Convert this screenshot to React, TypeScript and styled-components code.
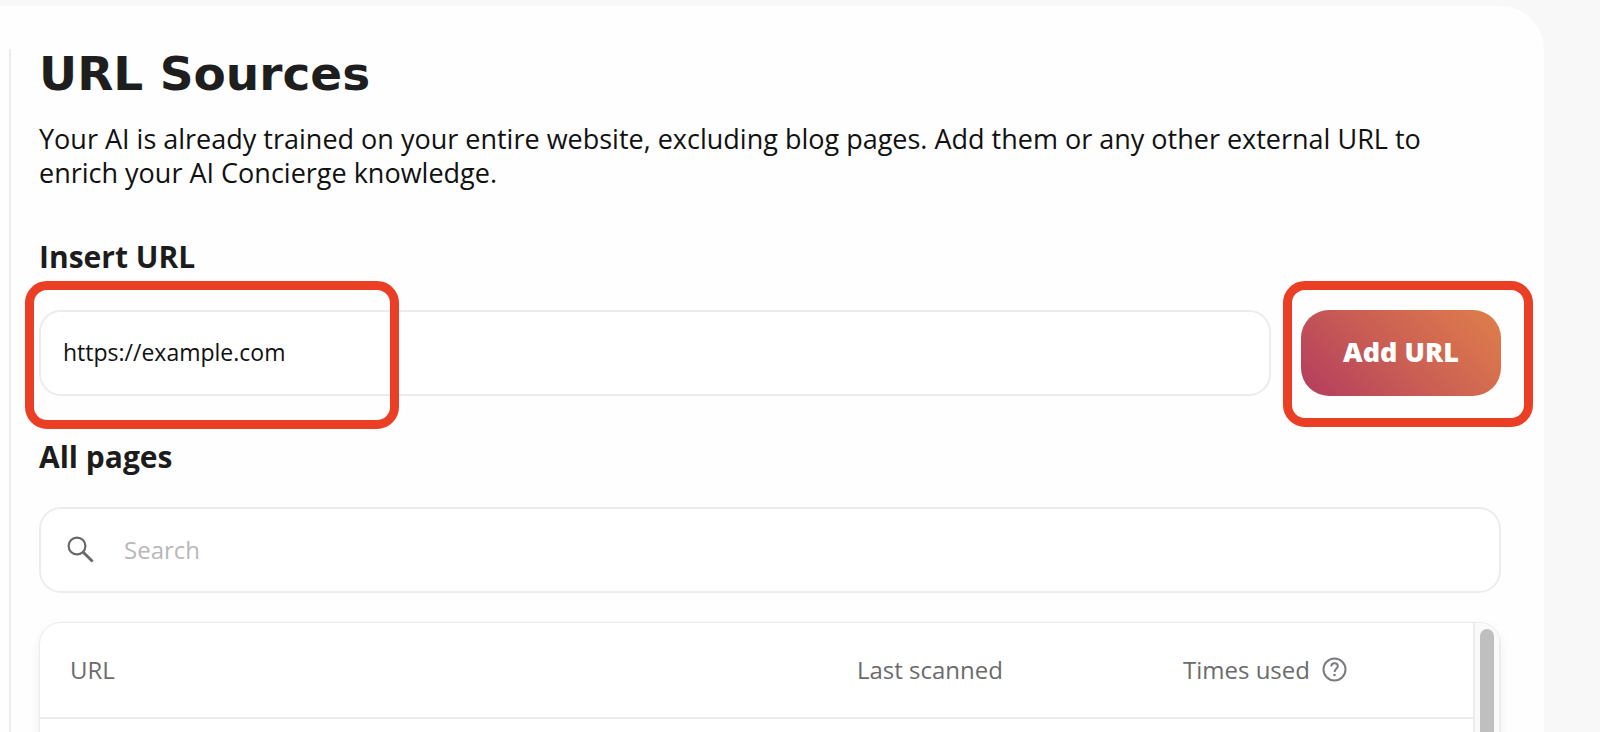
import React from 'react';
import styled, { createGlobalStyle } from 'styled-components';

const GlobalStyle = createGlobalStyle`
  * { box-sizing: border-box; }
  html, body { margin: 0; height: 100%; }
  body {
    background: #f8f8f8;
    color: #111;
    font-family: 'Open Sans', 'Noto Sans', sans-serif;
    overflow: hidden;
  }
`;

const line = '#ececec';

const Page = styled.div`
  height: 100vh;
  overflow: hidden;
  padding: 6px 56px 0 0;
`;

const Panel = styled.main`
  min-height: 100%;
  padding: 43px 43px 0 9px;
  background: #fefefe;
  border-top-right-radius: 44px;
`;

const Content = styled.div`
  min-height: 900px;
  padding-left: 28px;
  border-left: 2px solid ${line};
`;

const Title = styled.h1`
  margin: 0;
  color: #1e1e1e;
  font: 700 47px/50px 'DejaVu Sans', sans-serif;
`;

const Intro = styled.p`
  margin: 23px 0 0;
  max-width: 1400px;
  font-size: 27px;
  line-height: 34px;
`;

const FieldTitle = styled.label`
  display: block;
  margin-top: 47px;
  color: #1c1c1c;
  font-size: 30px;
  font-weight: 700;
  line-height: 40px;
`;

const SectionTitle = styled.h2`
  margin: 41px 0 0;
  color: #1c1c1c;
  font-size: 30px;
  font-weight: 700;
  line-height: 40px;
`;

const UrlForm = styled.form`
  display: flex;
  gap: 30px;
  margin-top: 33px;
`;

const Marked = styled.div<{ $grow?: boolean }>`
  position: relative;
  display: flex;
  flex: ${(p) => (p.$grow ? '1 1 0' : '0 0 200px')};
`;

const Highlight = styled.span<{ $kind: 'field' | 'button' }>`
  position: absolute;
  top: -29px;
  left: ${(p) => (p.$kind === 'field' ? '-14px' : '-18px')};
  width: ${(p) => (p.$kind === 'field' ? '374px' : '250px')};
  height: ${(p) => (p.$kind === 'field' ? '148px' : '146px')};
  border: 9px solid #eb3f25;
  border-radius: 22px;
  pointer-events: none;
`;

const UrlInput = styled.input`
  width: 100%;
  height: 86px;
  padding: 0 22px 2px;
  border: 2px solid ${line};
  border-radius: 22px;
  background: #fff;
  color: #111;
  font: 400 23px 'Open Sans', sans-serif;
  outline: none;
`;

const AddButton = styled.button`
  width: 100%;
  height: 86px;
  padding: 0 0 4px;
  border: 0;
  border-radius: 28px;
  background: linear-gradient(45deg, #b7425d 8%, #cb6053 50%, #de7c4b 95%);
  color: #fff;
  font: 800 27px 'Open Sans', sans-serif;
`;

const SearchBox = styled.label`
  display: flex;
  align-items: center;
  gap: 30px;
  height: 86px;
  margin-top: 30px;
  padding: 0 24px 2px 26px;
  border: 2px solid ${line};
  border-radius: 22px;
  background: #fff;
`;

const SearchInput = styled.input`
  flex: 1;
  padding: 0;
  border: 0;
  background: transparent;
  color: #111;
  font: 400 24px 'Open Sans', sans-serif;
  outline: none;

  &::placeholder { color: #b8b8b8; opacity: 1; }
`;

const TableFrame = styled.section`
  display: flex;
  height: 400px;
  margin-top: 29px;
  overflow: hidden;
  border: 1px solid ${line};
  border-radius: 22px 22px 0 0;
  box-shadow: 0 4px 12px rgba(0, 0, 0, 0.06);
  background: #fff;
`;

const UrlTable = styled.table`
  flex: 1;
  align-self: flex-start;
  border-collapse: collapse;
  table-layout: fixed;
`;

const HeaderCell = styled.th<{ $width?: string }>`
  width: ${(p) => p.$width ?? 'auto'};
  height: 95px;
  padding: 0 0 2px 30px;
  border-bottom: 2px solid ${line};
  color: #6b6b6b;
  font-size: 24px;
  font-weight: 400;
  text-align: left;
`;

const HeaderLabel = styled.span`
  display: flex;
  align-items: center;
  gap: 12px;
`;

const ScrollTrack = styled.div`
  flex: 0 0 27px;
  padding: 6px 5px 0;
  border: solid ${line};
  border-width: 0 1px 0 2px;
  background: #fafafa;
`;

const ScrollThumb = styled.div`
  height: 260px;
  border-radius: 7px;
  background: #bfbfbf;
`;

const SearchIcon = () => (
  <svg width="27" height="27" viewBox="0 0 27 27" fill="none" stroke="#686868" strokeWidth="2.2" aria-hidden="true">
    <circle cx="10" cy="10" r="8.4" />
    <path d="M16 16L25.6 25.6" strokeWidth="2.8" />
  </svg>
);

const HelpIcon = () => (
  <svg width="25" height="25" viewBox="0 0 25 25" fill="none" stroke="#7c7c80" strokeWidth="2" aria-hidden="true">
    <circle cx="12.5" cy="12.5" r="11" />
    <path d="M9.3 9.4C9.3 7.3 10.7 6.3 12.6 6.3S15.8 7.4 15.8 9.1C15.8 11.6 12.6 12 12.6 14.9" />
    <circle cx="12.5" cy="18" r="1.3" fill="#7c7c80" stroke="none" />
  </svg>
);

export default function App() {
  return (
    <Page>
      <GlobalStyle />
      <Panel>
        <Content>
          <Title>URL Sources</Title>
          <Intro>
            Your AI is already trained on your entire website, excluding blog pages. Add them or any other external URL
            to enrich your AI Concierge knowledge.
          </Intro>

          <FieldTitle htmlFor="url">Insert URL</FieldTitle>
          <UrlForm onSubmit={(e) => e.preventDefault()}>
            <Marked $grow>
              <UrlInput id="url" type="text" defaultValue="https://example.com" />
              <Highlight $kind="field" aria-hidden="true" />
            </Marked>
            <Marked>
              <AddButton type="submit">Add URL</AddButton>
              <Highlight $kind="button" aria-hidden="true" />
            </Marked>
          </UrlForm>

          <SectionTitle>All pages</SectionTitle>
          <SearchBox>
            <SearchIcon />
            <SearchInput type="search" placeholder="Search" aria-label="Search pages" />
          </SearchBox>

          <TableFrame>
            <UrlTable>
              <thead>
                <tr>
                  <HeaderCell scope="col">URL</HeaderCell>
                  <HeaderCell scope="col" $width="326px">Last scanned</HeaderCell>
                  <HeaderCell scope="col" $width="320px">
                    <HeaderLabel>
                      Times used
                      <HelpIcon />
                    </HeaderLabel>
                  </HeaderCell>
                </tr>
              </thead>
            </UrlTable>
            <ScrollTrack>
              <ScrollThumb />
            </ScrollTrack>
          </TableFrame>
        </Content>
      </Panel>
    </Page>
  );
}
